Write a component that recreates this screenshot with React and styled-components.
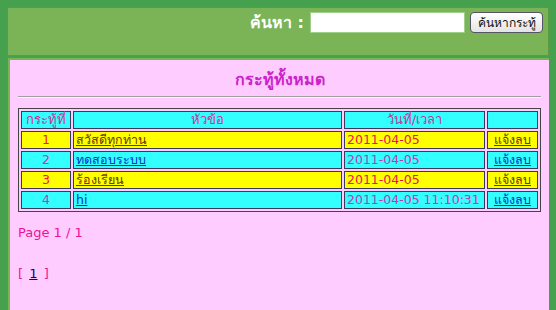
import styled, { createGlobalStyle } from "styled-components";

const GlobalStyle = createGlobalStyle`
    html, body {
        margin: 0;
        padding: 0;
        background: #45a14d;
    }
    body {
        font-family: "DejaVu Sans", "Noto Sans", sans-serif;
        font-size: 13px;
    }
`;

const Page = styled.div`
    padding: 7px 7px 0 7px;
    height: 310px;
    box-sizing: border-box;
    display: flex;
    flex-direction: column;
    gap: 1px;
    overflow: hidden;
`;

const Header = styled.div`
    height: 49px;
    box-sizing: border-box;
    background: #7bb357;
    border: 1px solid #5f9a43;
    display: flex;
    justify-content: flex-end;
    align-items: flex-start;
    gap: 5px;
    padding: 4px 5px 0 0;
`;

const SearchLabel = styled.label`
    color: #ffffff;
    font-weight: bold;
    font-size: 16px;
    line-height: 21px;
    margin-right: 1px;
`;

const SearchInput = styled.input`
    width: 155px;
    height: 21px;
    box-sizing: border-box;
    border: 1px solid #9fcf88;
    background: #ffffff;
    padding: 0 3px;
    outline: none;
`;

const SearchButton = styled.button`
    height: 21px;
    width: 73px;
    padding: 0;
    font-family: inherit;
    font-size: 12px;
    color: #111;
    background: linear-gradient(#ffffff, #e4e4e4);
    border: 1px solid #556;
    border-radius: 4px;
    white-space: nowrap;
`;

const Frame = styled.div`
    flex: 1;
    background: #7bb357;
    border: 1px solid #5f9a43;
    border-bottom: none;
    border-right: none;
    padding: 2px 0 0 2px;
    display: flex;
`;

const Content = styled.div`
    flex: 1;
    background: #ffccff;
    padding: 9px 8px 0 8px;
`;

const Title = styled.h2`
    margin: 0;
    text-align: center;
    color: #cc22cc;
    font-size: 16px;
    font-weight: bold;
    line-height: 22px;
`;

const Rule = styled.hr`
    margin: 5px 0 10px 0;
    border: none;
    border-top: 1px solid #a0a0a0;
    border-bottom: 1px solid #f4f4f4;
`;

const Board = styled.table`
    width: 100%;
    border: 1px solid #444;
    border-spacing: 2px;
    padding: 0;
    table-layout: fixed;
    font-size: 12.5px;
`;

const HeadCell = styled.th`
    background: #33ffff;
    border: 1px solid #3a3a5a;
    color: #cc3399;
    font-weight: normal;
    font-size: 13px;
    height: 16px;
    padding: 0;
    line-height: 16px;
    width: ${(p) => p.$w || "auto"};
`;

const Cell = styled.td`
    background: ${(p) => (p.$yellow ? "#ffff00" : "#33ffff")};
    color: ${(p) => (p.$yellow ? "#ee1155" : "#cc33bb")};
    border: 1px solid #3a3a5a;
    height: 16px;
    line-height: 16px;
    padding: 0 2px;
    text-align: ${(p) => (p.$center ? "center" : "left")};
    white-space: nowrap;
    overflow: hidden;
`;

const RowLink = styled.a`
    color: ${(p) => (p.$yellow ? "#6b3a00" : "#0033cc")};
    text-decoration: underline;
`;

const PageInfo = styled.div`
    color: #ee1199;
    margin-top: 13px;
    line-height: 16px;
`;

const Pager = styled.div`
    color: #ee1199;
    margin-top: 25px;
    line-height: 16px;
    word-spacing: 2px;
`;

const PagerLink = styled.a`
    color: #000099;
    text-decoration: underline;
`;

const topics = [
    { id: 1, title: "สวัสดีทุกท่าน", date: "2011-04-05" },
    { id: 2, title: "ทดสอบระบบ", date: "2011-04-05" },
    { id: 3, title: "ร้องเรียน", date: "2011-04-05" },
    { id: 4, title: "hi", date: "2011-04-05 11:10:31" },
];

const App = () => {
    return (
        <>
            <GlobalStyle />
            <Page>
                <Header>
                    <SearchLabel>ค้นหา :</SearchLabel>
                    <SearchInput type="text" />
                    <SearchButton>ค้นหากระทู้</SearchButton>
                </Header>
                <Frame>
                    <Content>
                        <Title>กระทู้ทั้งหมด</Title>
                        <Rule />
                        <Board>
                            <thead>
                                <tr>
                                    <HeadCell $w="48px">กระทู้ที่</HeadCell>
                                    <HeadCell>หัวข้อ</HeadCell>
                                    <HeadCell $w="139px">วันที่/เวลา</HeadCell>
                                    <HeadCell $w="49px"></HeadCell>
                                </tr>
                            </thead>
                            <tbody>
                                {topics.map((t) => {
                                    const yellow = t.id % 2 === 1;
                                    return (
                                        <tr key={t.id}>
                                            <Cell $yellow={yellow} $center>
                                                {t.id}
                                            </Cell>
                                            <Cell $yellow={yellow}>
                                                <RowLink href="#" $yellow={yellow}>
                                                    {t.title}
                                                </RowLink>
                                            </Cell>
                                            <Cell $yellow={yellow}>{t.date}</Cell>
                                            <Cell $yellow={yellow} $center>
                                                <RowLink href="#" $yellow={yellow}>
                                                    แจ้งลบ
                                                </RowLink>
                                            </Cell>
                                        </tr>
                                    );
                                })}
                            </tbody>
                        </Board>
                        <PageInfo>Page 1 / 1</PageInfo>
                        <Pager>
                            [ <PagerLink href="#">1</PagerLink> ]
                        </Pager>
                    </Content>
                </Frame>
            </Page>
        </>
    );
};

export default App;
